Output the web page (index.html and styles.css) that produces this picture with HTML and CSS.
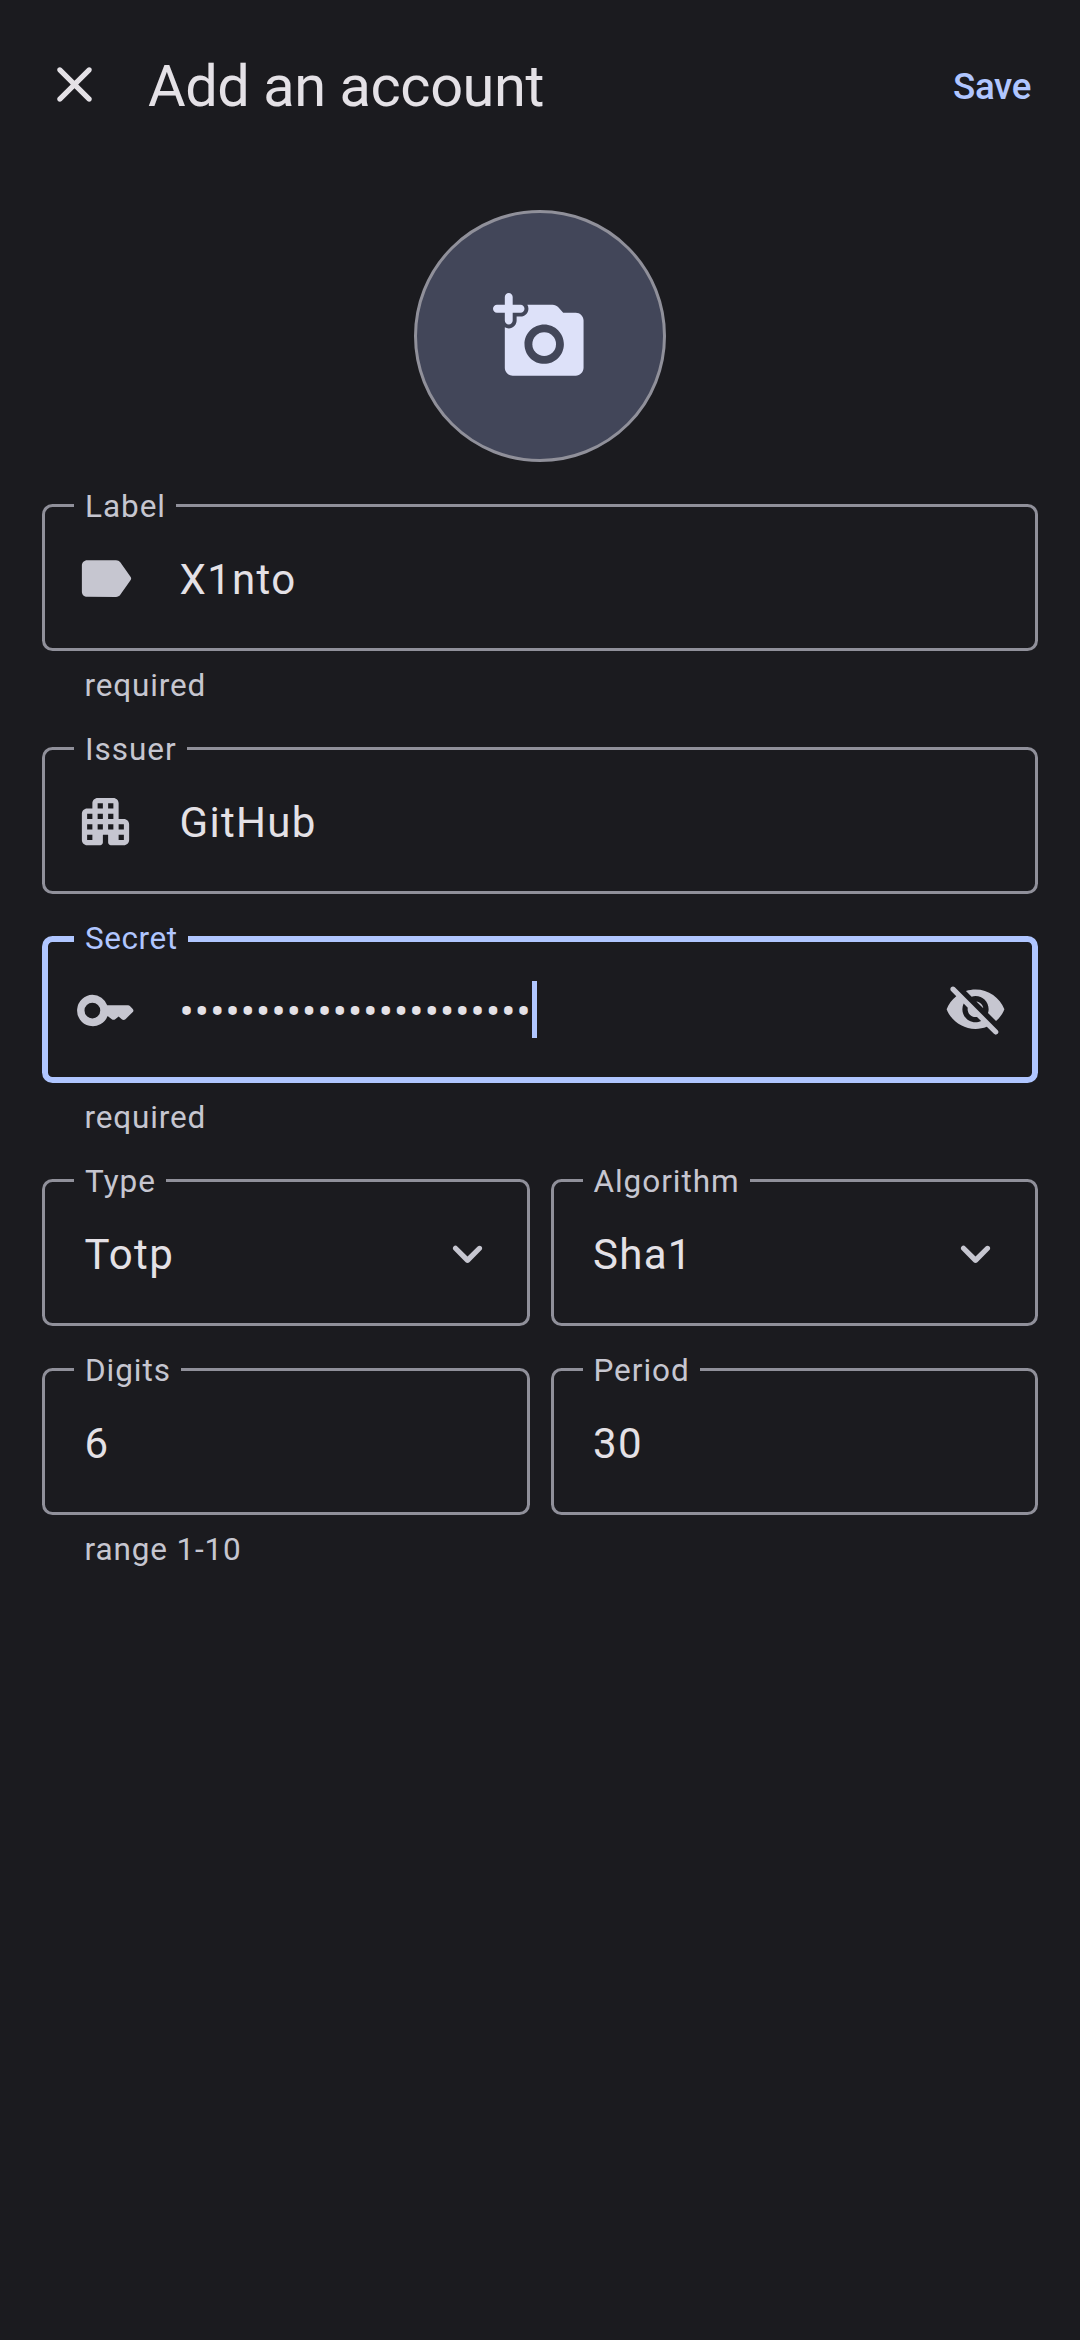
FILE: index.html
```html
<!DOCTYPE html>
<html lang="en">
<head>
<meta charset="utf-8">
<title>Add an account</title>
<link rel="stylesheet" href="styles.css">
</head>
<body>
<header class="top-bar">
  <svg class="icon close" viewBox="0 0 24 24"><path d="M18.3 5.71c-.39-.39-1.02-.39-1.41 0L12 10.59 7.11 5.7c-.39-.39-1.02-.39-1.41 0-.39.39-.39 1.02 0 1.41L10.59 12 5.7 16.89c-.39.39-.39 1.02 0 1.41.39.39 1.02.39 1.41 0L12 13.41l4.89 4.89c.39.39 1.02.39 1.41 0 .39-.39.39-1.02 0-1.41L13.41 12l4.89-4.89c.38-.38.38-1.02 0-1.4z"/></svg>
  <h1 class="title">Add an account</h1>
  <span class="save">Save</span>
</header>
<main class="form">
  <div class="avatar">
    <svg class="avatar-icon" viewBox="0 0 24 24"><path d="M3 8c0 .55.45 1 1 1s1-.45 1-1V6h2c.55 0 1-.45 1-1s-.45-1-1-1H5V2c0-.55-.45-1-1-1s-1 .45-1 1v2H1c-.55 0-1 .45-1 1s.45 1 1 1h2v2z"/><circle cx="13" cy="14" r="3"/><path d="M21 6h-3.17l-1.24-1.35c-.37-.41-.91-.65-1.47-.65h-6.4c.17.3.28.63.28 1 0 1.1-.9 2-2 2H6v1c0 1.1-.9 2-2 2-.37 0-.7-.11-1-.28V20c0 1.1.9 2 2 2h16c1.1 0 2-.9 2-2V8c0-1.1-.9-2-2-2zm-8 13c-2.76 0-5-2.24-5-5s2.24-5 5-5 5 2.24 5 5-2.24 5-5 5z"/></svg>
  </div>

  <div class="field">
    <div class="box">
      <span class="label">Label</span>
      <svg class="icon" viewBox="0 0 24 24"><path d="M17.63 5.84C17.27 5.33 16.67 5 16 5L5 5.01C3.9 5.01 3 5.9 3 7v10c0 1.1.9 1.99 2 1.99L16 19c.67 0 1.27-.33 1.63-.84l3.96-5.58c.25-.35.25-.81 0-1.16l-3.96-5.58z"/></svg>
      <span class="value">X1nto</span>
    </div>
    <p class="hint">required</p>
  </div>

  <div class="field">
    <div class="box">
      <span class="label">Issuer</span>
      <svg class="icon" viewBox="0 0 24 24"><path d="M17 11V5c0-1.1-.9-2-2-2H9c-1.1 0-2 .9-2 2v2H5c-1.1 0-2 .9-2 2v10c0 1.1.9 2 2 2h5c.55 0 1-.45 1-1v-3h2v3c0 .55.45 1 1 1h5c1.1 0 2-.9 2-2v-6c0-1.1-.9-2-2-2h-2zM7 19H5v-2h2v2zm0-4H5v-2h2v2zm0-4H5V9h2v2zm4 4H9v-2h2v2zm0-4H9V9h2v2zm0-4H9V5h2v2zm4 8h-2v-2h2v2zm0-4h-2V9h2v2zm0-4h-2V5h2v2zm4 12h-2v-2h2v2zm0-4h-2v-2h2v2z"/></svg>
      <span class="value">GitHub</span>
    </div>
  </div>

  <div class="field">
    <div class="box focused">
      <span class="label">Secret</span>
      <svg class="icon" viewBox="0 0 24 24"><path fill-rule="evenodd" d="M7 6a6 6 0 0 1 5.65 4H20.6q.4 0 .7.3L22.3 11.3q.7.7 0 1.4L19.6 15.3q-.7.6-1.4 0L17 14.3 15.7 15.3q-.65.45-1.3 0L12.8 14.1A6 6 0 1 1 7 6zM7 9a3 3 0 1 0 0 6 3 3 0 0 0 0-6z"/></svg>
      <span class="value masked">•••••••••••••••••••••••</span><span class="caret"></span>
      <svg class="icon trailing" viewBox="0 0 24 24"><path d="M12 6.5c2.76 0 5 2.24 5 5 0 .51-.1 1-.24 1.46l3.06 3.06c1.39-1.23 2.49-2.77 3.18-4.53C21.27 7.11 17 4 12 4c-1.27 0-2.49.2-3.64.57l2.17 2.17c.47-.14.96-.24 1.47-.24zM2.71 3.16c-.39.39-.39 1.02 0 1.41l1.97 1.97C3.06 7.83 1.77 9.53 1 11.5 2.73 15.89 7 19 12 19c1.52 0 2.97-.3 4.31-.82l2.72 2.72c.39.39 1.02.39 1.41 0 .39-.39.39-1.02 0-1.41L4.13 3.16c-.39-.39-1.03-.39-1.42 0zM12 16.5c-2.76 0-5-2.24-5-5 0-.77.18-1.5.49-2.14l1.57 1.57c-.03.18-.06.37-.06.57 0 1.66 1.34 3 3 3 .2 0 .38-.03.57-.07L14.14 16c-.65.32-1.37.5-2.14.5zm2.97-5.33c-.15-1.4-1.25-2.49-2.64-2.64l2.64 2.64z"/></svg>
    </div>
    <p class="hint">required</p>
  </div>

  <div class="row">
    <div class="field">
      <div class="box plain">
        <span class="label">Type</span>
        <span class="value">Totp</span>
        <svg class="icon trailing" viewBox="0 0 24 24"><path d="M15.88 9.29L12 13.17 8.12 9.29c-.39-.39-1.02-.39-1.41 0-.39.39-.39 1.02 0 1.41l4.59 4.59c.39.39 1.02.39 1.41 0l4.59-4.59c.39-.39.39-1.02 0-1.41-.39-.38-1.03-.39-1.42 0z"/></svg>
      </div>
    </div>
    <div class="field">
      <div class="box plain">
        <span class="label">Algorithm</span>
        <span class="value">Sha1</span>
        <svg class="icon trailing" viewBox="0 0 24 24"><path d="M15.88 9.29L12 13.17 8.12 9.29c-.39-.39-1.02-.39-1.41 0-.39.39-.39 1.02 0 1.41l4.59 4.59c.39.39 1.02.39 1.41 0l4.59-4.59c.39-.39.39-1.02 0-1.41-.39-.38-1.03-.39-1.42 0z"/></svg>
      </div>
    </div>
  </div>

  <div class="row">
    <div class="field">
      <div class="box plain">
        <span class="label">Digits</span>
        <span class="value">6</span>
      </div>
      <p class="hint">range 1-10</p>
    </div>
    <div class="field">
      <div class="box plain">
        <span class="label">Period</span>
        <span class="value">30</span>
      </div>
    </div>
  </div>
</main>
</body>
</html>
```
FILE: styles.css
```css
* {
  box-sizing: border-box;
}

body {
  margin: 0;
  min-height: 2340px;
  background: #1b1b1f;
  color: #e4e1e6;
  font-family: Roboto, sans-serif;
}

.top-bar {
  display: flex;
  align-items: center;
  height: 168px;
  padding: 0 49px 0 43px;
}

.icon {
  flex: none;
  width: 63px;
  height: 63px;
  fill: #c6c6d0;
}

.close {
  fill: #e4e1e6;
}

.title {
  flex: 1;
  margin: 4px 0 0 42px;
  font-size: 57.75px;
  font-weight: 400;
  letter-spacing: -0.45px;
  line-height: 74px;
}

.save {
  margin-top: 5px;
  color: #b0c6ff;
  font-size: 36.75px;
  font-weight: 500;
  letter-spacing: -0.4px;
  line-height: 52px;
}

.form {
  display: flex;
  flex-direction: column;
  gap: 42px;
  padding: 42px 42px 0;
}

.avatar {
  display: flex;
  align-items: center;
  justify-content: center;
  align-self: center;
  width: 252px;
  height: 252px;
  border: 3px solid #90909a;
  border-radius: 50%;
  background: #424659;
}

.avatar-icon {
  width: 94.5px;
  height: 94.5px;
  fill: #dde1f9;
}

.row {
  display: grid;
  grid-template-columns: 1fr 1fr;
  gap: 21px;
}

.box {
  position: relative;
  display: flex;
  align-items: center;
  height: 147px;
  padding: 1px 31px 0 32px;
  border-radius: 10.5px;
  box-shadow: inset 0 0 0 3px #90909a;
}

.plain {
  padding-left: 42.5px;
}

.focused {
  box-shadow: inset 0 0 0 6px #b0c6ff;
}

/* Sits on the outline and masks it to form the notch. */
.label {
  position: absolute;
  top: -18px;
  left: 32px;
  padding: 0 10.5px 0 11px;
  background: #1b1b1f;
  color: #c6c6d0;
  font-size: 31.5px;
  letter-spacing: 0.95px;
  line-height: 42px;
}

.focused .label {
  color: #b0c6ff;
  letter-spacing: 0.55px;
}

.value {
  margin-top: 3px;
  font-size: 42px;
  letter-spacing: 1.31px;
  line-height: 63px;
}

.icon + .value {
  margin-left: 42.5px;
}

.masked {
  letter-spacing: 1.15px;
}

.caret {
  width: 5px;
  height: 57px;
  margin-top: -1px;
  background: #b0c6ff;
}

.trailing {
  margin-left: auto;
}

.hint {
  height: 54px;
  margin: 0;
  padding: 14px 42.5px 0;
  color: #c6c6d0;
  font-size: 31.5px;
  letter-spacing: 0.85px;
  line-height: 40px;
  line-height: 42px;
}
```
